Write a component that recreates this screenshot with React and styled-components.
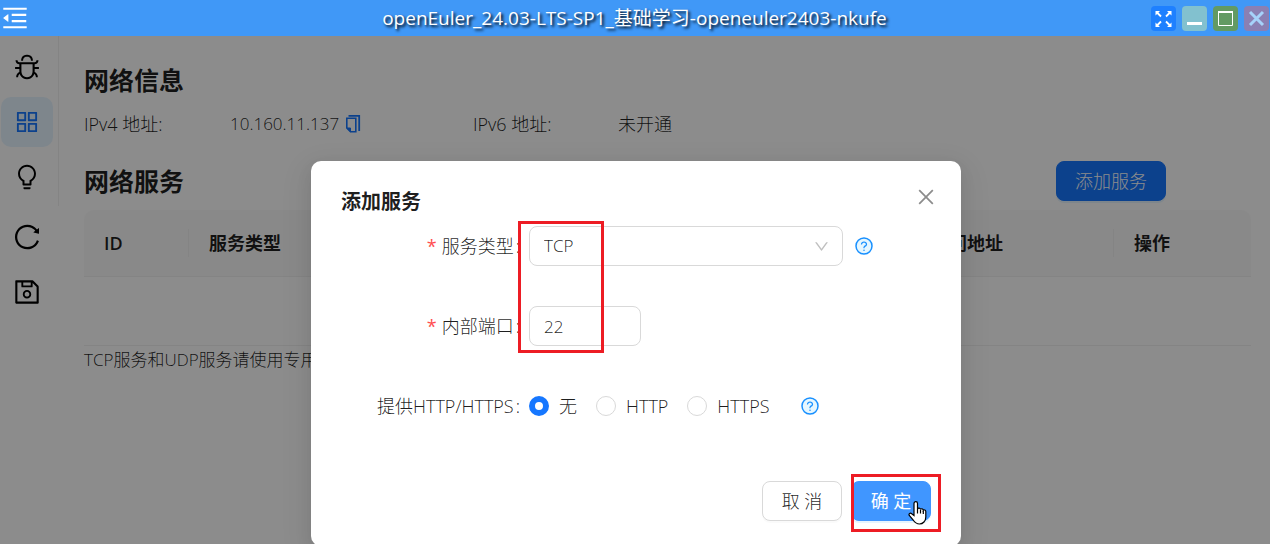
import React, { useState } from 'react';
import styled, { createGlobalStyle } from 'styled-components';
import {
  AiOutlineAppstore,
  AiOutlineBug,
  AiOutlineBulb,
  AiOutlineClose,
  AiOutlineDown,
  AiOutlineMenuFold,
  AiOutlineReload,
  AiOutlineSave,
} from 'react-icons/ai';

const GlobalStyle = createGlobalStyle`
  *, *::before, *::after {
    box-sizing: border-box;
  }
  body {
    margin: 0;
    background: white;
    color: rgba(0, 0, 0, 0.88);
    font-family: "Open Sans", "Noto Sans CJK SC", sans-serif;
    font-size: 18px;
    font-weight: 300;
    line-height: 28px;
  }
  button, input, select {
    font: inherit;
    color: inherit;
  }
  h1, h2, h3, p, dl, dd {
    margin: 0;
  }
`;

const Page = styled.div`
  display: flex;
  flex-direction: column;
  min-height: 100vh;
`;

const TitleBar = styled.header`
  display: grid;
  grid-template-columns: 1fr auto 1fr;
  align-items: center;
  height: 36px;
  padding-right: 1px;
  background: #4098f7;
  color: white;
  h1 {
    font-size: 19px;
    font-weight: 400;
    text-shadow: 2px 2px 3px black;
  }
`;

const FoldButton = styled.button`
  display: flex;
  justify-self: start;
  padding: 0;
  border: 0;
  background: none;
  color: white;
`;

const WindowButtons = styled.div`
  display: flex;
  justify-content: flex-end;
  gap: 6px;
`;

const WindowButton = styled.button`
  width: 25px;
  height: 25px;
  padding: 0;
  border: 0;
  border-radius: 4px;
  background: ${props => props.$color};
  svg {
    display: block;
  }
`;

const Body = styled.div`
  position: relative;
  display: flex;
  flex: 1;
  overflow: hidden;
`;

const Sidebar = styled.nav`
  flex: none;
  width: 59px;
`;

const SideGroup = styled.div`
  display: flex;
  flex-direction: column;
  gap: 5px;
  padding: 6px 5px 4px 1px;
  border-right: 1px solid ${props => (props.$line ? '#f0f0f0' : 'transparent')};
`;

const SideButton = styled.button`
  display: flex;
  align-items: center;
  justify-content: center;
  width: 52px;
  height: 50px;
  padding: 0;
  border: 0;
  border-radius: 10px;
  background: ${props => (props.$active ? '#e6f4ff' : 'none')};
  color: ${props => (props.$active ? '#1677ff' : 'black')};
`;

const Main = styled.main`
  flex: 1;
  padding: 25px 19px 0 25px;
  h2 {
    font-size: 25px;
    font-weight: 700;
    line-height: 38px;
  }
`;

const InfoList = styled.dl`
  display: grid;
  grid-template-columns: 146px 243px 145px auto;
  margin: 11px 0 23px;
`;

const Address = styled.dd`
  display: flex;
  align-items: center;
  gap: 6px;
  font-size: 17px;
`;

const CopyButton = styled.button`
  display: flex;
  padding: 0;
  border: 0;
  background: none;
  color: #1677ff;
`;

const ServiceHead = styled.div`
  display: flex;
  align-items: center;
  justify-content: space-between;
  margin: 0 85px 9px 0;
`;

const Note = styled.p`
  font-size: 17px;
`;

const Button = styled.button`
  height: 40px;
  padding: 0 ${props => (props.$wide ? '18px' : '0')};
  min-width: 80px;
  border: 1px solid ${props => props.$border || props.$color};
  border-radius: 8px;
  background: ${props => props.$color};
  color: ${props => (props.$border ? 'inherit' : 'white')};
  font-weight: ${props => (props.$strong ? 400 : 300)};
  box-shadow: 0 2px 0 ${props => (props.$border ? 'rgba(0, 0, 0, 0.02)' : 'rgba(5, 145, 255, 0.1)')};
`;

const Table = styled.table`
  width: 100%;
  border-spacing: 0;
  table-layout: fixed;
  th {
    position: relative;
    height: 67px;
    padding: 0 20px;
    border-bottom: 1px solid #f0f0f0;
    background: #fafafa;
    font-weight: 600;
    text-align: left;
  }
  th:first-child {
    border-top-left-radius: 10px;
  }
  th:last-child {
    border-top-right-radius: 10px;
  }
  th:not(:last-child)::after {
    content: '';
    position: absolute;
    top: 19px;
    right: 0;
    width: 1px;
    height: 28px;
    background: #f0f0f0;
  }
  td {
    height: 69px;
    border-bottom: 1px solid #f0f0f0;
  }
`;

const Overlay = styled.div`
  position: absolute;
  inset: 0;
  display: flex;
  justify-content: center;
  align-items: flex-start;
  padding: 125px 0 0 2px;
  background: rgba(0, 0, 0, 0.45);
`;

const Modal = styled.form`
  position: relative;
  width: 650px;
  padding: 25px 30px;
  border-radius: 10px;
  background: white;
  box-shadow: 0 6px 16px rgba(0, 0, 0, 0.08), 0 9px 28px 8px rgba(0, 0, 0, 0.05);
  h3 {
    margin-bottom: 8px;
    font-size: 20px;
    font-weight: 700;
    line-height: 32px;
  }
`;

const CloseButton = styled.button`
  position: absolute;
  top: 25px;
  right: 24px;
  display: flex;
  padding: 0;
  border: 0;
  background: none;
  color: rgba(0, 0, 0, 0.45);
`;

const FormRow = styled.div`
  display: grid;
  grid-template-columns: 188px 1fr;
  align-items: center;
  height: 40px;
  margin-bottom: ${props => (props.$last ? '55px' : '40px')};
`;

const RowLabel = styled.label`
  padding-right: 9px;
  text-align: right;
  &::before {
    content: ${props => (props.$required ? "'*'" : 'none')};
    margin-right: 5px;
    color: #ff4d4f;
    font-weight: 400;
  }
  &::after {
    content: ':';
    margin-left: 2px;
  }
`;

const Controls = styled.div`
  display: flex;
  align-items: center;
  gap: 11px;
`;

const SelectBox = styled.div`
  display: grid;
  align-items: center;
  width: 314px;
  select, svg {
    grid-area: 1 / 1;
  }
  select {
    width: 100%;
    height: 40px;
    padding: 0 14px;
    border: 1px solid #d9d9d9;
    border-radius: 8px;
    background: white;
    font-size: 17px;
    appearance: none;
  }
  svg {
    justify-self: end;
    margin-right: 13px;
    color: rgba(0, 0, 0, 0.25);
    pointer-events: none;
  }
`;

const PortInput = styled.input`
  width: 112px;
  height: 40px;
  padding: 0 14px;
  border: 1px solid #d9d9d9;
  border-radius: 8px;
  background: white;
  font-size: 17px;
`;

const RadioGroup = styled.div`
  display: flex;
  gap: 19px;
  margin-right: 19px;
`;

const Radio = styled.label`
  display: flex;
  align-items: center;
  gap: 10px;
  input {
    width: 20px;
    height: 20px;
    margin: 0;
    border: 1px solid #d9d9d9;
    border-radius: 50%;
    background: white;
    appearance: none;
  }
  input:checked {
    border: 6px solid #1677ff;
  }
`;

const Footer = styled.div`
  display: flex;
  justify-content: flex-end;
  gap: 9px;
`;

const Highlight = styled.span`
  position: absolute;
  top: ${props => props.$top}px;
  left: ${props => props.$left}px;
  width: ${props => props.$width}px;
  height: ${props => props.$height}px;
  border: 3px solid #ed1c24;
  pointer-events: none;
`;

const Pointer = styled.svg`
  position: absolute;
  top: 339px;
  left: 596px;
  pointer-events: none;
`;

const services = ['无', 'HTTP', 'HTTPS'];

function CopyIcon() {
  return (
    <svg width='16' height='20' viewBox='0 0 16 20' fill='none' stroke='currentColor' strokeWidth='1.6'>
      <path d='M1.800 4.300h9v13.400H5.500L1.800 14z' />
      <path d='M1.800 14H5.500v3.700z' fill='currentColor' strokeWidth='1' />
      <path d='M3.500 1.800h10.700V17' strokeWidth='1.800' />
    </svg>
  );
}

function HelpIcon() {
  return (
    <svg width='20' height='20' viewBox='0 0 1024 1024' fill='#1890ff'>
      <circle cx='512' cy='512' r='410' fill='#e6f7ff' stroke='#1890ff' strokeWidth='76' />
      <path d='M623.6 316.7C593.6 290.4 554 276 512 276s-81.6 14.5-111.6 40.7C369.2 344 352 380.7 352 420v7.6c0 4.4 3.6 8 8 8h48c4.4 0 8-3.6 8-8V420c0-44.1 43.1-80 96-80s96 35.9 96 80c0 31.1-22 59.6-56.1 72.7-21.2 8.100-39.200 22.300-52.100 40.900-13.100 19-19.900 41.800-19.900 64.900V620c0 4.400 3.600 8 8 8h48c4.400 0 8-3.600 8-8v-22.700a48.300 48.300 0 0 1 30.900-44.800c59-22.700 97.100-74.700 97.100-132.500.1-39.300-17.100-76-48.300-103.300z' />
      <circle cx='512' cy='732' r='40' />
    </svg>
  );
}

function WindowControls() {
  return (
    <WindowButtons>
      <WindowButton $color='#1e80ff' aria-label='全屏'>
        <svg viewBox='0 0 25 25' fill='white' stroke='white' strokeWidth='1.8'>
          <path d='M6 6.500l4 4M19 6.500l-4 4M6 19.500l4-4M19 19.500l-4-4' />
          <path stroke='none' d='M4.500 5h4.500L4.500 9.500zM20.500 5H16l4.500 4.500zM4.500 21H9l-4.500-4.500zM20.500 21H16l4.500-4.500z' />
        </svg>
      </WindowButton>
      <WindowButton $color='#82c1cf' aria-label='最小化'>
        <svg viewBox='0 0 25 25'>
          <path d='M5 16h15v3H5z' fill='white' />
        </svg>
      </WindowButton>
      <WindowButton $color='#639a63' aria-label='最大化'>
        <svg viewBox='0 0 25 25'>
          <path d='M5.500 6h14v13.500h-14z' fill='none' stroke='white' />
          <path d='M5 5h15v2H5z' fill='white' />
        </svg>
      </WindowButton>
      <WindowButton $color='#8a80b3' aria-label='关闭'>
        <svg viewBox='0 0 25 25' stroke='#a6d2fa' strokeWidth='3'>
          <path d='M6 6l13 13M19 6L6 19' />
        </svg>
      </WindowButton>
    </WindowButtons>
  );
}

function AddServiceModal() {
  const [type, setType] = useState('TCP');
  const [port, setPort] = useState('22');
  const [http, setHttp] = useState('无');

  return (
    <Modal role='dialog' aria-labelledby='modal-title' onSubmit={e => e.preventDefault()}>
      <h3 id='modal-title'>添加服务</h3>
      <CloseButton type='button' aria-label='关闭'>
        <AiOutlineClose size={22} />
      </CloseButton>
      <FormRow>
        <RowLabel $required htmlFor='type'>服务类型</RowLabel>
        <Controls>
          <SelectBox>
            <select id='type' value={type} onChange={e => setType(e.target.value)}>
              <option>TCP</option>
              <option>UDP</option>
            </select>
            <AiOutlineDown size={17} />
          </SelectBox>
          <HelpIcon />
        </Controls>
      </FormRow>
      <FormRow>
        <RowLabel $required htmlFor='port'>内部端口</RowLabel>
        <Controls>
          <PortInput id='port' value={port} onChange={e => setPort(e.target.value)} />
        </Controls>
      </FormRow>
      <FormRow $last>
        <RowLabel as='span' id='http-label'>提供HTTP/HTTPS</RowLabel>
        <Controls>
          <RadioGroup role='radiogroup' aria-labelledby='http-label'>
            {services.map(name => (
              <Radio key={name}>
                <input type='radio' name='http' checked={http === name} onChange={() => setHttp(name)} />
                {name}
              </Radio>
            ))}
          </RadioGroup>
          <HelpIcon />
        </Controls>
      </FormRow>
      <Footer>
        <Button type='button' $color='white' $border='#d9d9d9'>取 消</Button>
        <Button type='submit' $color='#4096ff' $strong>确 定</Button>
      </Footer>
      <Highlight $top={60} $left={207} $width={86} $height={132} />
      <Highlight $top={313} $left={540} $width={90} $height={58} />
      <Pointer width='20' height='26' viewBox='0 0 20 26'>
        <path
          d='M7 15.500V3.500C7 1 10.500 1 10.500 3.500V9c.5-1.500 3-1.200 3 .5.700-1.300 2.800-.8 2.800.8.800-.9 2.500-.4 2.500 1.200V17c0 4-2.800 7-6.300 7-3.500 0-5-1.800-6.500-4.200L2.300 15.500c-1-1.800 1-3 2.400-1.800z'
          fill='white'
          stroke='black'
          strokeWidth='1.200'
        />
        <path d='M10.500 9v4.500M13.500 10v3.500M16.300 11v3' stroke='black' strokeWidth='1.200' />
      </Pointer>
    </Modal>
  );
}

export default function App() {
  return (
    <Page>
      <GlobalStyle />
      <TitleBar>
        <FoldButton aria-label='菜单'>
          <AiOutlineMenuFold size={30} />
        </FoldButton>
        <h1>openEuler_24.03-LTS-SP1_基础学习-openeuler2403-nkufe</h1>
        <WindowControls />
      </TitleBar>
      <Body>
        <Sidebar>
          <SideGroup $line>
            <SideButton aria-label='调试'><AiOutlineBug size={28} /></SideButton>
            <SideButton aria-label='网络' $active><AiOutlineAppstore size={28} /></SideButton>
            <SideButton aria-label='提示'><AiOutlineBulb size={28} /></SideButton>
          </SideGroup>
          <SideGroup>
            <SideButton aria-label='刷新'><AiOutlineReload size={30} /></SideButton>
            <SideButton aria-label='保存'><AiOutlineSave size={30} /></SideButton>
          </SideGroup>
        </Sidebar>
        <Main>
          <h2>网络信息</h2>
          <InfoList>
            <dt>IPv4 地址:</dt>
            <Address>
              10.160.11.137
              <CopyButton aria-label='复制'><CopyIcon /></CopyButton>
            </Address>
            <dt>IPv6 地址:</dt>
            <dd>未开通</dd>
          </InfoList>
          <ServiceHead>
            <h2>网络服务</h2>
            <Button $color='#1677ff' $wide>添加服务</Button>
          </ServiceHead>
          <Table>
            <colgroup>
              <col width='105' />
              <col />
              <col width='203' />
              <col width='137' />
            </colgroup>
            <thead>
              <tr>
                <th>ID</th>
                <th>服务类型</th>
                <th>访问地址</th>
                <th>操作</th>
              </tr>
            </thead>
            <tbody>
              <tr>
                <td colSpan='4' />
              </tr>
            </tbody>
          </Table>
          <Note>TCP服务和UDP服务请使用专用</Note>
        </Main>
        <Overlay>
          <AddServiceModal />
        </Overlay>
      </Body>
    </Page>
  );
}
